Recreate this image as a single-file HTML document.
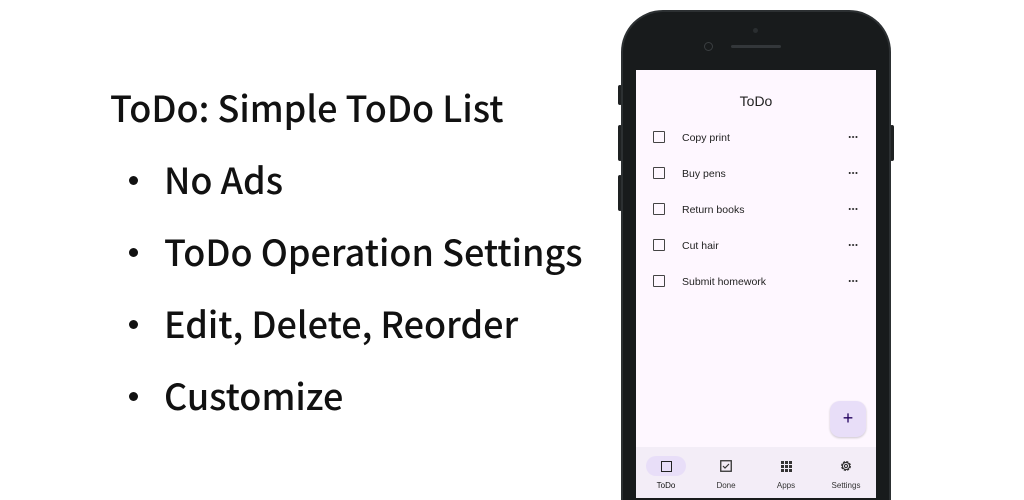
<!DOCTYPE html>
<html style="width:1024px;height:500px;overflow:hidden"><head><meta charset="utf-8"><style>
*{margin:0;padding:0;box-sizing:border-box}
body{width:1024px;height:500px;background:#fff;position:relative;overflow:hidden;font-family:"Noto Sans CJK JP","Liberation Sans",sans-serif;color:#111}
.h{position:absolute;left:110px;top:82px;font-size:36px;line-height:50px;white-space:nowrap;font-weight:500}
.li{position:absolute;left:164px;font-size:36px;line-height:50px;white-space:nowrap;font-weight:500}
.li:before{content:"";position:absolute;left:-35px;top:22px;width:9px;height:9px;border-radius:50%;background:#111}
.phone{position:absolute;left:621px;top:10px;width:270px;height:490px;background:#181b1c;border-radius:42px 42px 0 0;border:2px solid #2c3032;border-bottom:0}
.btn{position:absolute;background:#1e2122;width:4px;border-radius:2px}
.screen{position:absolute;left:636px;top:70px;width:240px;height:428px;background:#fef7ff;font-family:"Liberation Sans",Arial,sans-serif}
.title{position:absolute;top:23px;width:100%;text-align:center;font-size:14px;color:#222}
.row{position:absolute;left:0;width:100%;height:20px}
.cb{position:absolute;left:17px;top:4px;width:12px;height:12px;border:1.5px solid #444;border-radius:1px}
.tx{position:absolute;left:46px;top:5px;font-size:10.5px;color:#222}
.dots{position:absolute;left:212px;top:9px;width:10px;height:2px;background:radial-gradient(circle,#333 0.9px,transparent 1.1px) 0 0/3.4px 2px repeat-x}
.fab{position:absolute;left:194px;top:331px;width:36px;height:36px;background:#e8def8;border-radius:10px;box-shadow:0 1px 2px rgba(0,0,0,.2);text-align:center;line-height:34px;font-size:18px;color:#21005d}
.nav{position:absolute;left:0;top:377px;width:240px;height:51px;background:#f3edf7}
.it{position:absolute;top:0;width:60px;text-align:center}
.lab{position:absolute;top:34px;width:100%;font-size:8px;color:#333;text-align:center}
.pill{position:absolute;left:10px;top:9px;width:40px;height:20px;border-radius:10px;background:#e8def8}
</style></head><body>
<div class="h">ToDo: Simple ToDo List</div>
<div class="li" style="top:154px">No Ads</div>
<div class="li" style="top:226px">ToDo Operation Settings</div>
<div class="li" style="top:298px">Edit, Delete, Reorder</div>
<div class="li" style="top:370px">Customize</div>

<div class="btn" style="left:618px;top:85px;height:20px"></div>
<div class="btn" style="left:618px;top:125px;height:36px"></div>
<div class="btn" style="left:618px;top:175px;height:36px"></div>
<div class="btn" style="left:890px;top:125px;height:36px"></div>
<div class="phone"></div>
<div style="position:absolute;left:704px;top:42px;width:9px;height:9px;border-radius:50%;border:1.5px solid #3a3e40"></div>
<div style="position:absolute;left:731px;top:45px;width:50px;height:3px;border-radius:2px;background:#33373a"></div>
<div style="position:absolute;left:753px;top:28px;width:5px;height:5px;border-radius:50%;background:#2a2e30"></div>
<div class="screen">
<div class="title">ToDo</div>
<div class="row" style="top:57px"><div class="cb"></div><div class="tx">Copy print</div><div class="dots"></div></div>
<div class="row" style="top:93px"><div class="cb"></div><div class="tx">Buy pens</div><div class="dots"></div></div>
<div class="row" style="top:129px"><div class="cb"></div><div class="tx">Return books</div><div class="dots"></div></div>
<div class="row" style="top:165px"><div class="cb"></div><div class="tx">Cut hair</div><div class="dots"></div></div>
<div class="row" style="top:201px"><div class="cb"></div><div class="tx">Submit homework</div><div class="dots"></div></div>
<div class="fab">+</div>
<div class="nav">
<div class="it" style="left:0"><div class="pill"></div><div style="position:absolute;left:25px;top:14px;width:11px;height:11px;border:1.5px solid #222"></div><div class="lab" style="color:#111">ToDo</div></div>
<div class="it" style="left:60px"><svg style="position:absolute;left:24px;top:13px" width="12" height="12" viewBox="0 0 12 12"><rect x="0.75" y="0.75" width="10.5" height="10.5" fill="none" stroke="#333" stroke-width="1.3"/><path d="M3 6l2 2 4-4" fill="none" stroke="#333" stroke-width="1.2"/></svg><div class="lab">Done</div></div>
<div class="it" style="left:120px"><svg style="position:absolute;left:25px;top:14px" width="11" height="11" viewBox="0 0 11 11" fill="#333"><rect x="0" y="0" width="3" height="3"/><rect x="4" y="0" width="3" height="3"/><rect x="8" y="0" width="3" height="3"/><rect x="0" y="4" width="3" height="3"/><rect x="4" y="4" width="3" height="3"/><rect x="8" y="4" width="3" height="3"/><rect x="0" y="8" width="3" height="3"/><rect x="4" y="8" width="3" height="3"/><rect x="8" y="8" width="3" height="3"/></svg><div class="lab">Apps</div></div>
<div class="it" style="left:180px"><svg style="position:absolute;left:23px;top:12px" width="14" height="14" viewBox="0 0 14 14"><circle cx="7" cy="7" r="4.3" fill="none" stroke="#333" stroke-width="1.3" stroke-dasharray="2.2 1.2"/><circle cx="7" cy="7" r="3.6" fill="none" stroke="#333" stroke-width="1.1"/><circle cx="7" cy="7" r="1.6" fill="none" stroke="#333" stroke-width="1.1"/></svg><div class="lab">Settings</div></div>
</div>
</div>
</body></html>
